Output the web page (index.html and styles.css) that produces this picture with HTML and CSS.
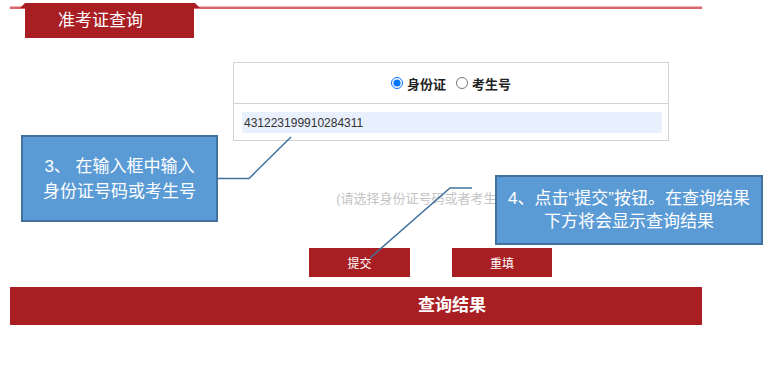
FILE: index.html
```html
<!DOCTYPE html>
<html lang="zh-CN">
<head>
<meta charset="utf-8">
<title>准考证查询</title>
<link rel="stylesheet" href="styles.css">
</head>
<body>
<div class="page">
  <div class="header">
    <div class="tab">准考证查询</div>
  </div>

  <div class="form">
    <div class="radios">
      <label class="opt"><input type="radio" name="t" checked><span>身份证</span></label>
      <label class="opt"><input type="radio" name="t"><span>考生号</span></label>
    </div>
    <div class="field">
      <input class="idinput" type="text" value="431223199910284311">
    </div>
  </div>

  <div class="hint">(请选择身份证号码或者考生号进行查询)</div>

  <div class="buttons">
    <button class="btn btn-submit">提交</button>
    <button class="btn btn-reset">重填</button>
  </div>

  <div class="result-bar">查询结果</div>

  <div class="callout callout-1">
    <div>3、 在输入框中输入</div>
    <div>身份证号码或考生号</div>
  </div>
  <div class="callout callout-2">
    <div>4、点击“提交”按钮。在查询结果</div>
    <div>下方将会显示查询结果</div>
  </div>

  <svg class="connectors" width="774" height="379" viewBox="0 0 774 379">
    <polyline points="218,178.5 249,178.5 291,137" />
    <polyline points="472,188 450,188 370,258" />
  </svg>
</div>
</body>
</html>
```

FILE: styles.css
```css
html, body {
  margin: 0;
  padding: 0;
  background: #fff;
}

body {
  font-family: "Liberation Sans", "Noto Sans CJK SC", sans-serif;
  color: #333;
}

.page {
  position: relative;
  width: 774px;
  height: 379px;
  overflow: hidden;
}

.header {
  margin-left: 10px;
  width: 692px;
  height: 35px;
  padding-top: 3px;
  background: linear-gradient(to bottom,
    transparent 6px,
    #eeb3b5 6px, #eeb3b5 7px,
    #d8676c 7px, #d8676c 9px,
    transparent 9px);
}

.tab {
  margin-left: 10px;
  width: 180px;
  height: 35px;
  box-sizing: border-box;
  padding-left: 38px;
  background: #a81e23;
  color: #fff;
  font-size: 17px;
  line-height: 35px;
  clip-path: polygon(0 5px, 5px 0, 175px 0, 180px 5px, 174px 5px, 174px 35px, 5px 35px, 5px 5px);
}

.form {
  margin: 24px 0 0 233px;
  width: 436px;
  box-sizing: border-box;
  border: 1px solid #d2d2d2;
}

.radios {
  height: 41px;
  border-bottom: 1px solid #d2d2d2;
  display: flex;
  align-items: center;
  justify-content: center;
  gap: 10px;
  box-sizing: border-box;
}

.opt {
  display: flex;
  align-items: center;
  font-size: 13px;
  font-weight: bold;
  color: #222;
}

.opt input {
  margin: 0 4px 0 0;
  width: 12px;
  height: 12px;
}

.field {
  padding: 8px 6px 7px 8px;
}

.idinput {
  display: block;
  width: 420px;
  height: 21px;
  box-sizing: border-box;
  border: 0;
  outline: none;
  padding: 0 2px;
  background: #e8f0fe;
  font-family: "Liberation Sans", sans-serif;
  font-size: 12px;
  color: #333;
}

.hint {
  margin: 49px 0 0 233px;
  width: 436px;
  text-align: center;
  font-size: 13px;
  line-height: 18px;
  color: #c4c4c4;
}

.buttons {
  margin: 40px 0 0 309px;
  display: flex;
  gap: 42px;
}

.btn {
  height: 29px;
  border: 0;
  padding: 0;
  background: #a81e23;
  color: #fff;
  font-family: "Liberation Sans", "Noto Sans CJK SC", sans-serif;
  font-size: 12px;
}

.btn-submit { width: 101px; }
.btn-reset { width: 100px; }

.result-bar {
  margin: 10px 0 0 10px;
  width: 692px;
  height: 38px;
  box-sizing: border-box;
  padding-left: 408px;
  background: #a81e23;
  color: #fff;
  font-size: 17px;
  font-weight: bold;
  line-height: 38px;
}

.callout {
  position: absolute;
  box-sizing: border-box;
  border: 2px solid #41719c;
  background: #5b9bd5;
  color: #fff;
  font-size: 17px;
  display: flex;
  flex-direction: column;
  align-items: center;
  justify-content: center;
  text-align: center;
}

.callout-1 {
  left: 21px;
  top: 135px;
  width: 197px;
  height: 87px;
  line-height: 25px;
}

.callout-2 {
  left: 495px;
  top: 175px;
  width: 268px;
  height: 70px;
  line-height: 23px;
}

.connectors {
  position: absolute;
  left: 0;
  top: 0;
  pointer-events: none;
}

.connectors polyline {
  fill: none;
  stroke: #41719c;
  stroke-width: 1.5;
}
```
